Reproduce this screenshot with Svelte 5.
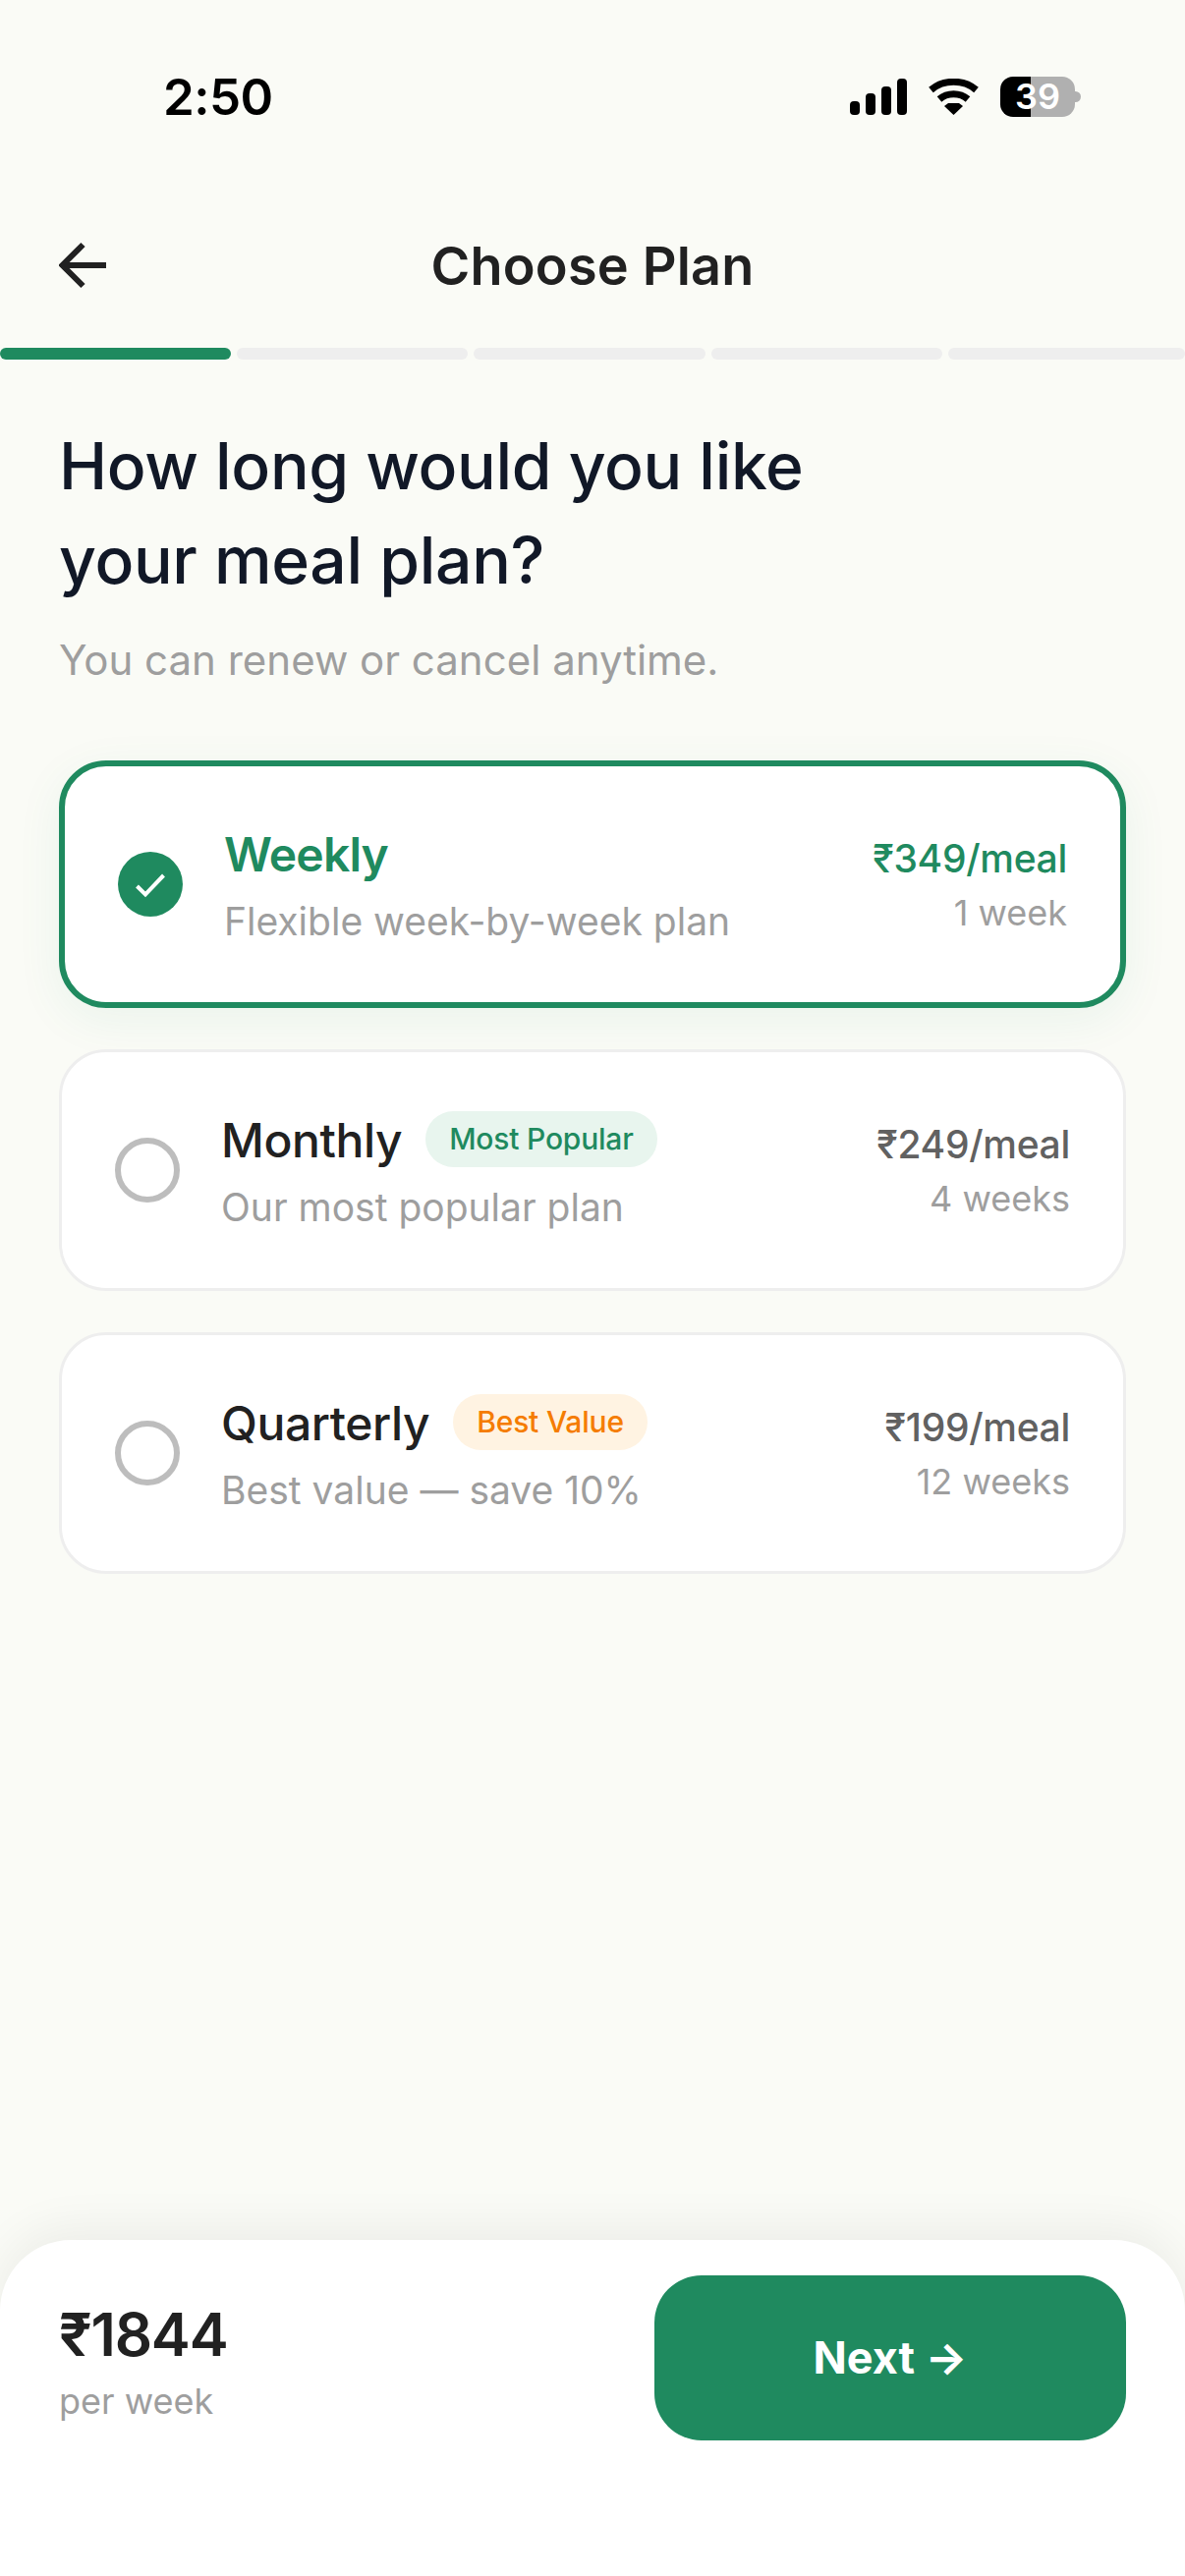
<script lang="ts">
  const plans = [
    { name: "Weekly", desc: "Flexible week-by-week plan", price: "₹349/meal", term: "1 week", selected: true },
    { name: "Monthly", desc: "Our most popular plan", price: "₹249/meal", term: "4 weeks", badge: "Most Popular", tone: "green" },
    { name: "Quarterly", desc: "Best value — save 10%", price: "₹199/meal", term: "12 weeks", badge: "Best Value", tone: "orange" }
  ];
</script>

<div class="screen">
  <div class="status">
    <span class="time">2:50</span>
    <div class="status-icons">
      <svg class="signal" width="58" height="37" viewBox="0 0 58 37" aria-hidden="true">
        <rect x="0" y="23" width="10" height="14" rx="4" />
        <rect x="16" y="15" width="10" height="22" rx="4" />
        <rect x="32" y="8" width="10" height="29" rx="4" />
        <rect x="48" y="0" width="10" height="37" rx="4" />
      </svg>
      <svg class="wifi" width="51" height="37" viewBox="0 0 51 37" aria-hidden="true">
        <path d="M2.5 11.5C15 0.5 36 0.5 48.5 11.5" />
        <path d="M11 21C19 14 32 14 40 21" />
        <polygon points="25.500,37 16,28 20,25 31,25 35,28" />
      </svg>
      <div class="battery">39</div>
    </div>
  </div>

  <header class="topbar">
    <button class="back" aria-label="Back">
      <svg width="48" height="48" viewBox="0 0 48 48" aria-hidden="true">
        <path d="M48 24H4M24.500 3L3.500 24l21 21" />
      </svg>
    </button>
    <h1>Choose Plan</h1>
  </header>

  <div class="progress">
    <span class="seg done"></span>
    <span class="seg"></span>
    <span class="seg"></span>
    <span class="seg"></span>
    <span class="seg"></span>
  </div>

  <main class="content">
    <h2>How long would you like<br />your meal plan?</h2>
    <p class="lead">You can renew or cancel anytime.</p>

    <div class="plans">
      {#each plans as plan}
        <div class="plan" class:selected={plan.selected}>
          {#if plan.selected}
            <span class="radio on">
              <svg width="30" height="30" viewBox="0 0 30 30" aria-hidden="true">
                <path d="M1.500 17L10 25.500 28.500 6" />
              </svg>
            </span>
          {:else}
            <span class="radio"></span>
          {/if}
          <div class="plan-main">
            <div class="plan-title">
              <span class="plan-name">{plan.name}</span>
              {#if plan.badge}
                <span class="badge {plan.tone}">{plan.badge}</span>
              {/if}
            </div>
            <div class="plan-desc">{plan.desc}</div>
          </div>
          <div class="plan-side">
            <div class="plan-price">{plan.price}</div>
            <div class="plan-term">{plan.term}</div>
          </div>
        </div>
      {/each}
    </div>
  </main>

  <footer class="bottom">
    <div class="total">
      <div class="amount">₹1844</div>
      <div class="period">per week</div>
    </div>
    <button class="next">Next →</button>
  </footer>
</div>

<style>
  :global(body) { margin: 0; background: #fafbf6; }

  .screen {
    width: 1206px;
    height: 2622px;
    display: flex;
    flex-direction: column;
    background: #fafbf6;
    font-family: Inter, "Liberation Sans", sans-serif;
    color: #212121;
    overflow: hidden;
  }

  .status {
    height: 176px;
    padding: 10px 106px 0 166px;
    display: flex;
    align-items: center;
    justify-content: space-between;
    flex-shrink: 0;
  }
  .time { font-size: 51px; font-weight: 600; color: #000; letter-spacing: -0.5px; }
  .status-icons { display: flex; align-items: center; }
  .signal { fill: #000; }
  .wifi { margin-left: 22px; margin-right: 22px; fill: #000; }
  .wifi path { fill: none; stroke: #000; stroke-width: 7; }
  .battery {
    position: relative;
    width: 76px;
    height: 41px;
    margin-right: 6px;
    border-radius: 13px;
    background: linear-gradient(90deg, #000 41%, #b0b0b0 41%);
    color: #fff;
    font-size: 36px;
    font-weight: 600;
    line-height: 41px;
    text-align: center;
  }
  .battery::after {
    content: "";
    position: absolute;
    right: -6px;
    top: 15px;
    width: 6px;
    height: 11px;
    border-radius: 0 6px 6px 0;
    background: #b0b0b0;
  }

  .topbar {
    position: relative;
    height: 168px;
    display: flex;
    align-items: center;
    justify-content: center;
    flex-shrink: 0;
  }
  .back {
    position: absolute;
    left: 60px;
    top: 60px;
    width: 48px;
    height: 48px;
    padding: 0;
    border: 0;
    background: none;
  }
  .back svg { display: block; }
  .back path { fill: none; stroke: #212121; stroke-width: 6; }
  .topbar h1 { margin: 0; font-size: 54px; font-weight: 600; color: #212121; letter-spacing: 0.2px; }

  .progress { display: grid; grid-template-columns: repeat(5, 1fr); flex-shrink: 0; }
  .seg { height: 12px; margin-right: 6px; border-radius: 6px; background: #eeeeee; }
  .seg:last-child { margin-right: 0; }
  .seg.done { background: #1f8a5f; }

  .content { flex: 1; padding: 60px 60px 0; }
  h2 {
    margin: 0;
    font-size: 66px;
    line-height: 96px;
    font-weight: 500;
    color: #111827;
    letter-spacing: -0.3px;
  }
  .lead { margin: 24px 0 0; font-size: 42px; line-height: 60px; color: #9e9e9e; }

  .plans { margin-top: 72px; display: flex; flex-direction: column; gap: 42px; }
  .plan {
    display: flex;
    align-items: center;
    gap: 42px;
    padding: 0 54px;
    height: 246px;
    box-sizing: border-box;
    background: #fff;
    border: 3px solid #eeeeee;
    border-radius: 48px;
  }
  .plan.selected {
    height: 252px;
    border: 6px solid #1f8a5f;
    box-shadow: 0 12px 48px rgba(31, 138, 95, 0.07);
  }
  .radio {
    width: 66px;
    height: 66px;
    box-sizing: border-box;
    flex-shrink: 0;
    border: 6px solid #bdbdbd;
    border-radius: 50%;
    display: flex;
    align-items: center;
    justify-content: center;
  }
  .radio.on { border: 0; background: #1f8a5f; }
  .radio svg { overflow: visible; }
  .radio path { fill: none; stroke: #fff; stroke-width: 4; }

  .plan-main { flex: 1; min-width: 0; padding-top: 1px; }
  .plan-title { display: flex; align-items: center; gap: 24px; height: 66px; }
  .plan-name { font-size: 48px; font-weight: 500; color: #212121; letter-spacing: -0.4px; }
  .selected .plan-name { color: #1f8a5f; font-weight: 600; letter-spacing: -0.8px; }
  .badge {
    height: 57px;
    margin-top: -2px;
    padding: 0 24px;
    border-radius: 29px;
    font-size: 30px;
    font-weight: 500;
    line-height: 57px;
    letter-spacing: -0.2px;
  }
  .badge.green { background: #e8f5ee; color: #1f8a5f; }
  .badge.orange { background: #fff3e2; color: #f57c00; }
  .plan-desc { margin-top: 8px; font-size: 39px; line-height: 54px; color: #9e9e9e; }

  .plan-side { text-align: right; }
  .plan-price { font-size: 39px; line-height: 57px; font-weight: 500; color: #616161; letter-spacing: -0.3px; }
  .selected .plan-price { color: #1f8a5f; }
  .plan-term { font-size: 36px; line-height: 54px; color: #9e9e9e; }

  .bottom {
    height: 342px;
    box-sizing: border-box;
    flex-shrink: 0;
    padding: 36px 60px 0;
    display: flex;
    align-items: flex-start;
    justify-content: space-between;
    background: #fff;
    border-radius: 72px 72px 0 0;
    box-shadow: 0 -12px 48px rgba(0, 0, 0, 0.06);
  }
  .total { padding-top: 24px; }
  .amount { font-size: 60px; line-height: 72px; font-weight: 600; color: #212121; letter-spacing: -1.2px; }
  .period { margin-top: 8px; font-size: 36px; line-height: 48px; color: #9e9e9e; }
  .next {
    width: 480px;
    height: 168px;
    padding: 0 0 2px;
    border: 0;
    border-radius: 48px;
    background: #1f8a5f;
    color: #fff;
    font-family: inherit;
    font-size: 45px;
    font-weight: 700;
  }
</style>
